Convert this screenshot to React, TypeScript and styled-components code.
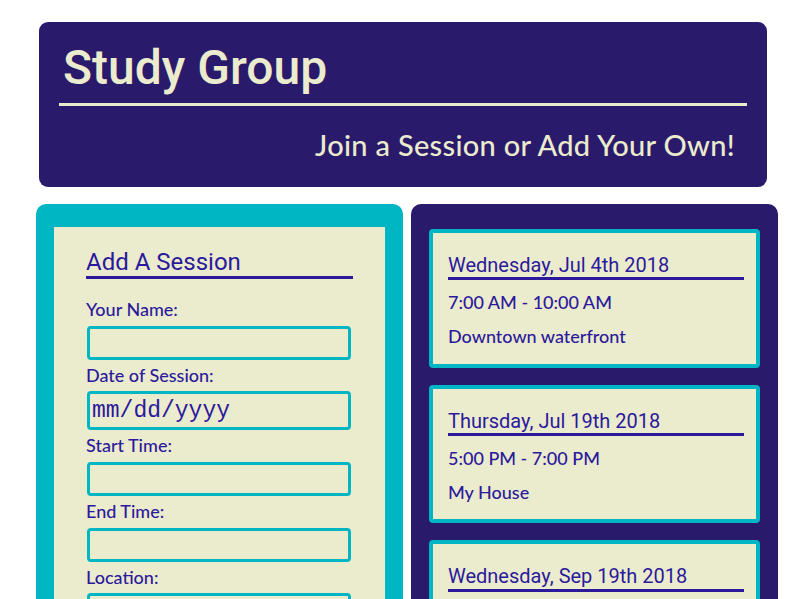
import React from "react";
import styled, { createGlobalStyle } from "styled-components";

const GlobalStyle = createGlobalStyle`
  html, body { margin: 0; padding: 0; background: #ffffff; }
  body { font-family: "Lato", "Open Sans", sans-serif; overflow: hidden; }
  * { box-sizing: border-box; }
`;

const DARK = "#2a1a6c";
const CREAM = "#ebebcd";
const TEAL = "#00b6c3";
const INK = "#2b1a9c";

const Page = styled.div`
  width: 812px;
  height: 599px;
  overflow: hidden;
  padding-top: 22px;
`;

const Header = styled.header`
  margin: 0 45px 0 39px;
  background: ${DARK};
  border-radius: 9px;
  padding: 18px 20px 24px 20px;
  display: flex;
  flex-direction: column;
`;

const Title = styled.h1`
  margin: 0;
  padding: 0 0 7px 4px;
  font-family: "Roboto", sans-serif;
  font-weight: 500;
  font-size: 48px;
  line-height: 1.172;
  color: ${CREAM};
  border-bottom: 3px solid ${CREAM};
`;

const Subtitle = styled.h2`
  margin: 22px 12px 0 0;
  text-align: right;
  font-family: "Lato", sans-serif;
  font-weight: 500;
  font-size: 29px;
  letter-spacing: 0.3px;
  line-height: 1.2;
  color: ${CREAM};
`;

const Columns = styled.main`
  margin-top: 17px;
  padding: 0 34px 0 36px;
  display: grid;
  grid-template-columns: 367px 367px;
  gap: 8px;
`;

const FormPanel = styled.section`
  background: ${TEAL};
  border-radius: 10px 10px 0 0;
  padding: 23px 18px 0 18px;
  height: 420px;
`;

const FormBox = styled.form`
  background: ${CREAM};
  padding: 21px 32px 0 32px;
  height: 100%;
  display: flex;
  flex-direction: column;
`;

const FormTitle = styled.h3`
  margin: 0 0 20px 0;
  font-family: "Roboto", sans-serif;
  font-weight: 400;
  font-size: 24px;
  line-height: 1.172;
  color: ${INK};
  border-bottom: 3px solid ${INK};
`;

const Fields = styled.div`
  display: flex;
  flex-direction: column;
  gap: 5px;
`;

const Label = styled.label`
  font-family: "Lato", sans-serif;
  font-weight: 500;
  font-size: 18px;
  line-height: 1.2;
  color: ${INK};
`;

const Input = styled.input<{ $tall?: boolean }>`
  display: block;
  margin-left: 1px;
  width: 264px;
  height: ${(p) => (p.$tall ? 39 : 34)}px;
  border: 3px solid ${TEAL};
  border-radius: 4px;
  background: ${CREAM};
  padding: 0 2px;
  font-family: "Courier New", "Courier", "Nimbus Mono PS", "FreeMono", "Liberation Mono", monospace;
  font-size: 23px;
  font-weight: 400;
  color: ${INK};
  outline: none;
  &::placeholder { color: ${INK}; opacity: 1; }
`;

const ListPanel = styled.section`
  background: ${DARK};
  border-radius: 10px 10px 0 0;
  padding: 25px 18px 0 18px;
  height: 420px;
  display: flex;
  flex-direction: column;
  gap: 17px;
`;

const Card = styled.article`
  flex: none;
  background: ${CREAM};
  border: 4px solid ${TEAL};
  border-radius: 4px;
  padding: 21px 12px 16px 15px;
  display: flex;
  flex-direction: column;
`;

const CardDate = styled.h4`
  margin: 0 0 12px 0;
  font-family: "Roboto", sans-serif;
  font-weight: 400;
  font-size: 20px;
  line-height: 1.172;
  color: ${INK};
  border-bottom: 3px solid ${INK};
`;

const CardLine = styled.p<{ $last?: boolean }>`
  margin: 0 0 ${(p) => (p.$last ? 0 : 12)}px 0;
  font-family: "Lato", sans-serif;
  font-weight: 500;
  font-size: 18px;
  line-height: 1.2;
  color: ${INK};
`;

const sessions = [
  { date: "Wednesday, Jul 4th 2018", time: "7:00 AM - 10:00 AM", place: "Downtown waterfront" },
  { date: "Thursday, Jul 19th 2018", time: "5:00 PM - 7:00 PM", place: "My House" },
  { date: "Wednesday, Sep 19th 2018", time: "6:00 PM - 8:00 PM", place: "Library" },
];

export default function App() {
  return (
    <>
      <GlobalStyle />
      <Page>
        <Header>
          <Title>Study Group</Title>
          <Subtitle>Join a Session or Add Your Own!</Subtitle>
        </Header>
        <Columns>
          <FormPanel>
            <FormBox onSubmit={(e) => e.preventDefault()}>
              <FormTitle>Add A Session</FormTitle>
              <Fields>
                <Label htmlFor="name">Your Name:</Label>
                <Input id="name" type="text" />
                <Label htmlFor="date">Date of Session:</Label>
                <Input id="date" type="text" $tall placeholder="mm/dd/yyyy" />
                <Label htmlFor="start">Start Time:</Label>
                <Input id="start" type="text" />
                <Label htmlFor="end">End Time:</Label>
                <Input id="end" type="text" />
                <Label htmlFor="loc">Location:</Label>
                <Input id="loc" type="text" />
              </Fields>
            </FormBox>
          </FormPanel>
          <ListPanel>
            {sessions.map((s) => (
              <Card key={s.date}>
                <CardDate>{s.date}</CardDate>
                <CardLine>{s.time}</CardLine>
                <CardLine $last>{s.place}</CardLine>
              </Card>
            ))}
          </ListPanel>
        </Columns>
      </Page>
    </>
  );
}
